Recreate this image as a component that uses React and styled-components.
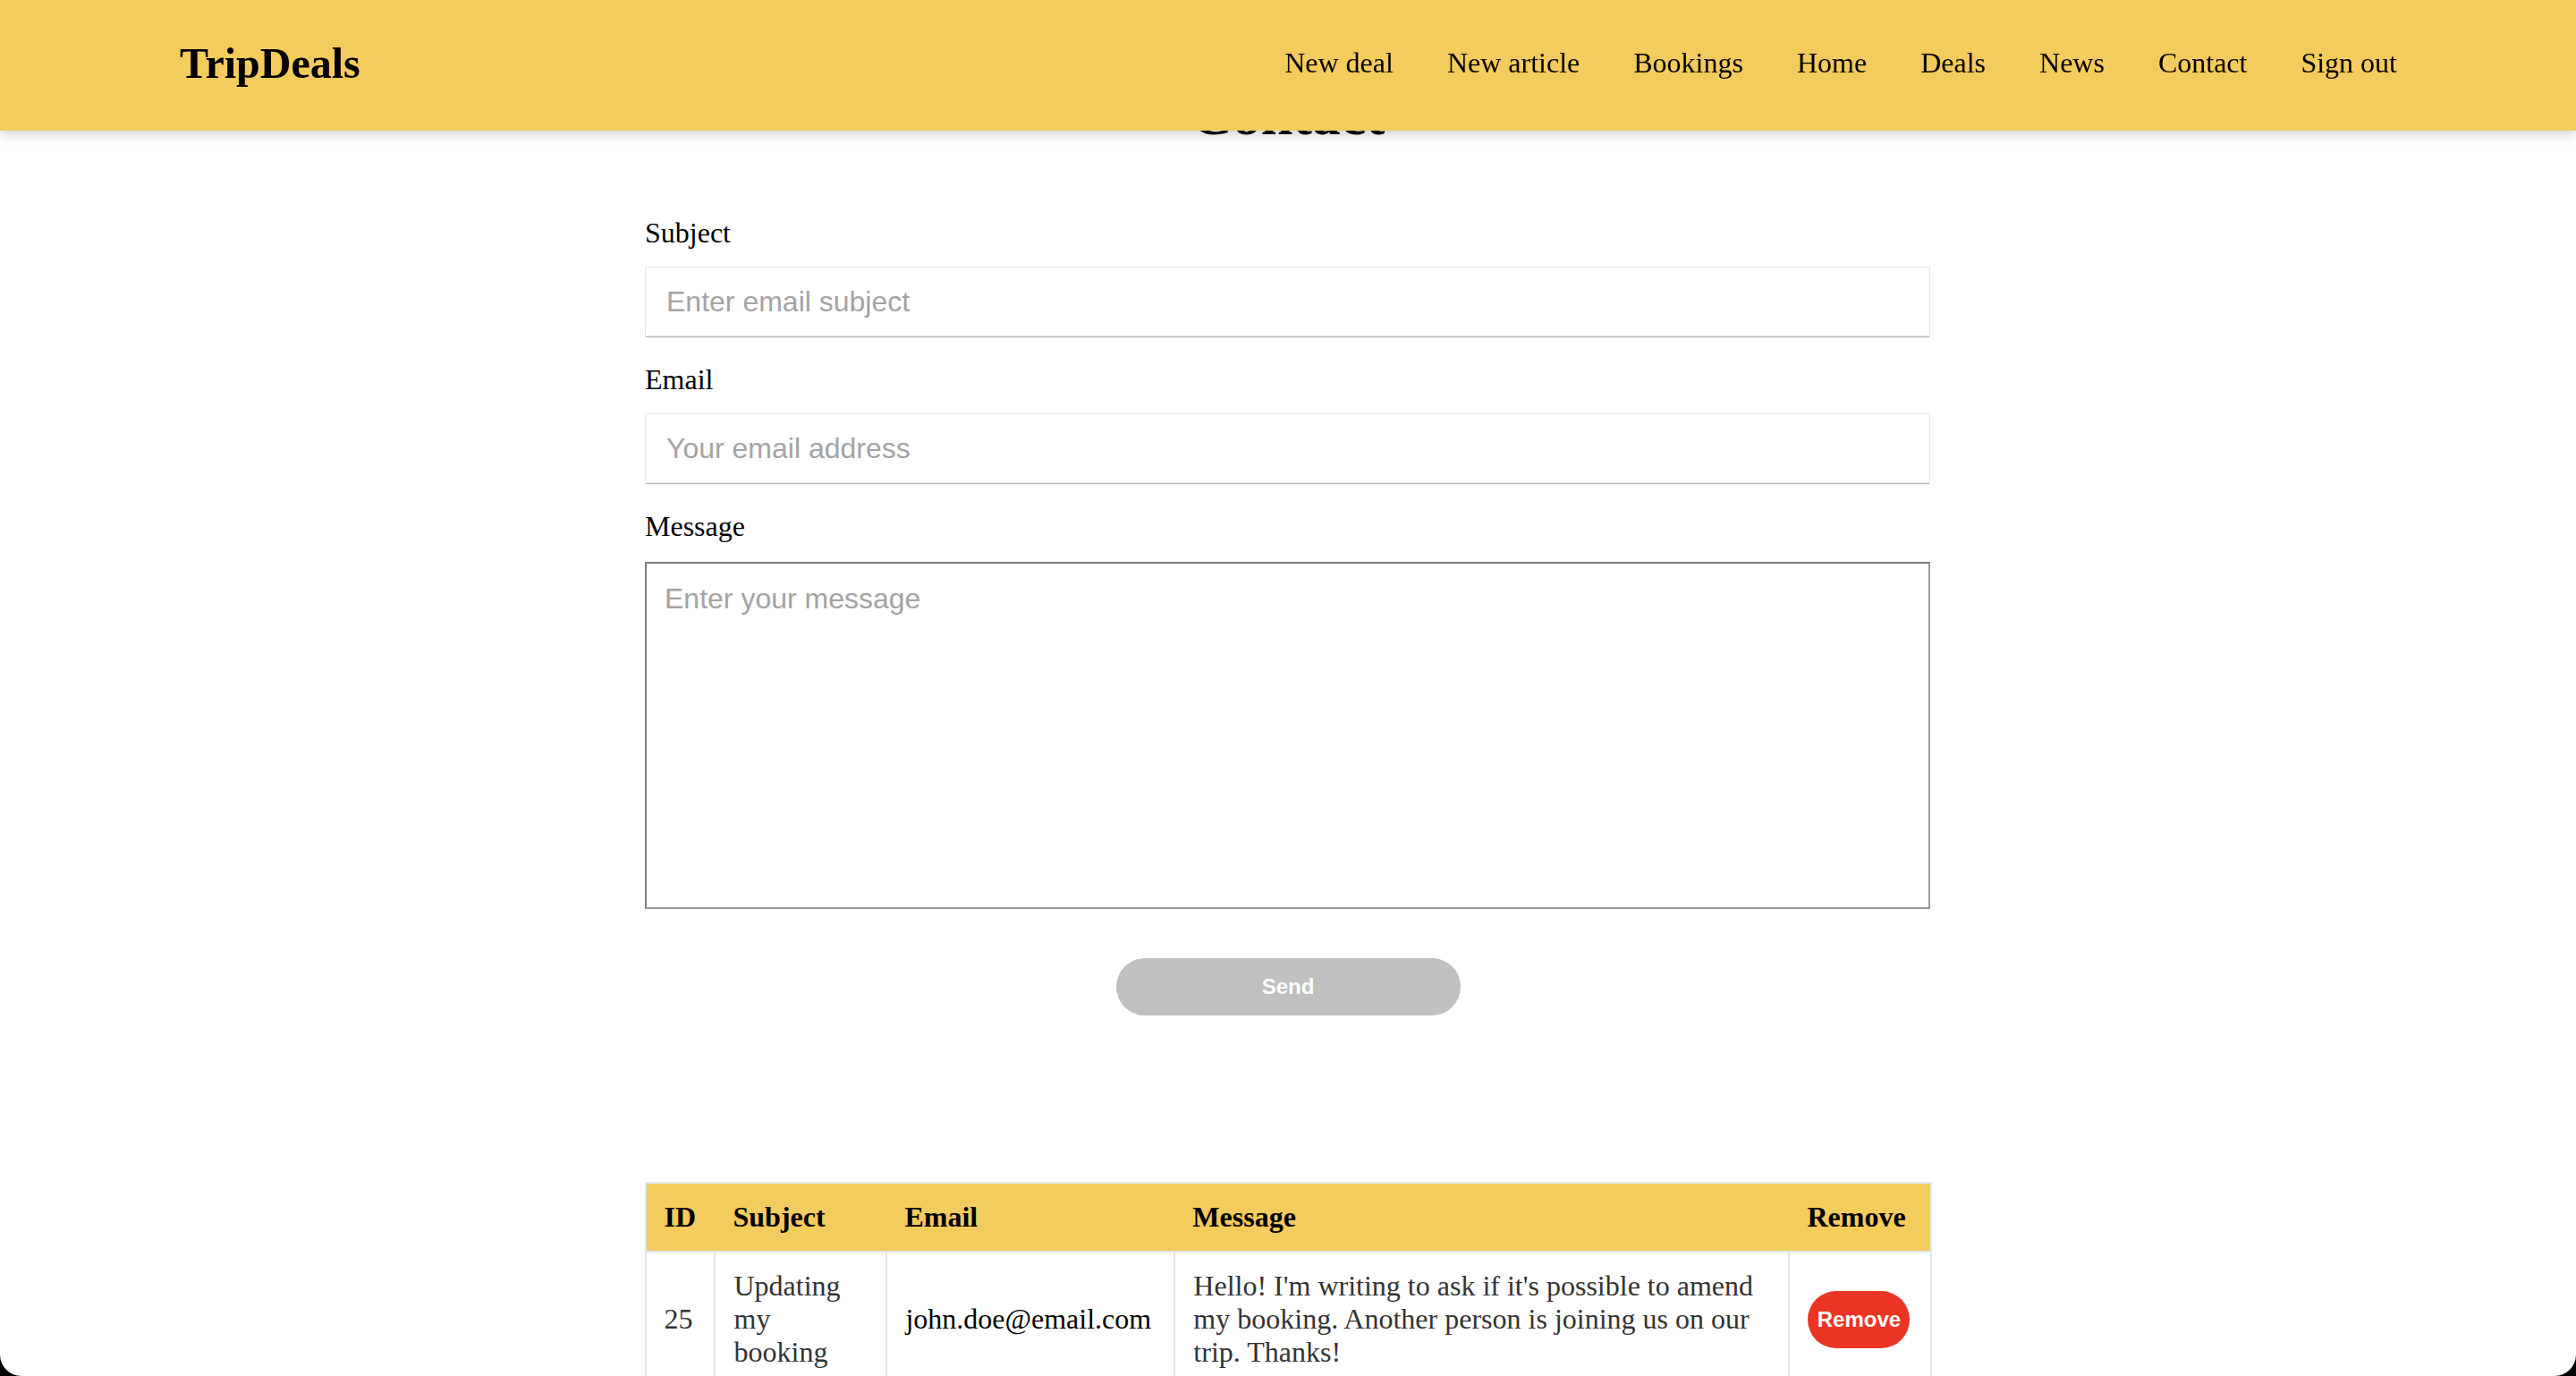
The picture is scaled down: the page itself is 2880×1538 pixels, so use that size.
import React from "react";
import styled, { createGlobalStyle } from "styled-components";

const Global = createGlobalStyle`
  html, body { margin: 0; padding: 0; background: #000; }
  body { font-family: "Liberation Serif", "Times New Roman", serif; }
  * { box-sizing: border-box; }
`;

const Page = styled.div`
  position: relative;
  height: 1538px;
  overflow: hidden;
  background: #fff;
  border-radius: 0 0 24px 24px;
`;

const Header = styled.header`
  position: fixed;
  top: 0;
  left: 0;
  right: 0;
  z-index: 10;
  height: 146px;
  padding: 0 200px 6px 201px;
  background: #f4cb5d;
  box-shadow: 0 3px 14px rgba(0, 0, 0, 0.22);
  display: flex;
  align-items: center;
  justify-content: space-between;
`;

const Logo = styled.div`
  font-size: 48px;
  font-weight: 700;
  color: #000;
`;

const Nav = styled.nav`
  display: flex;
  gap: 60px;
`;

const NavLink = styled.a`
  font-size: 32px;
  color: #000;
  text-decoration: none;
  cursor: pointer;
`;

const Main = styled.main`
  padding-top: 92px;
`;

const Title = styled.h1`
  margin: 0;
  font-size: 64px;
  font-weight: 700;
  text-align: center;
  color: #000;
`;

const Form = styled.form`
  width: 1438px;
  margin: 76px auto 0;
  display: flex;
  flex-direction: column;
`;

const Field = styled.div`
  display: flex;
  flex-direction: column;
  margin-bottom: 30px;
`;

const Label = styled.label`
  font-size: 32px;
  line-height: 37px;
  color: #000;
  margin-bottom: 19px;
`;

const Input = styled.input`
  width: 1437px;
  height: 78px;
  border: 1px solid #e7e7e7;
  box-shadow: 0 2px 1px -1px rgba(0, 0, 0, 0.28);
  padding: 0 23px;
  font-family: "Liberation Sans", Arial, sans-serif;
  font-size: 32px;
  outline: none;
  background: #fff;
  &::placeholder { color: #a3a3a3; }
`;

const TextArea = styled.textarea`
  width: 1437px;
  height: 388px;
  margin-top: 2px;
  border: 2px solid #7b7b7b;
  border-bottom-color: #9a9a9a;
  border-right-color: #9a9a9a;
  padding: 21px 20px;
  font-family: "Liberation Sans", Arial, sans-serif;
  font-size: 32px;
  resize: none;
  outline: none;
  &::placeholder { color: #a3a3a3; }
`;

const ButtonRow = styled.div`
  display: flex;
  justify-content: center;
  margin-top: 25px;
`;

const PillButton = styled.button`
  border: none;
  border-radius: 40px;
  height: 64px;
  width: ${(p) => p.$width}px;
  background: ${(p) => p.$bg};
  color: #fff;
  font-family: "Liberation Sans", Arial, sans-serif;
  font-weight: 700;
  font-size: 24px;
  cursor: pointer;
  padding: 0;
`;

const Table = styled.table`
  width: 1439px;
  margin: 186px auto 0;
  border-collapse: collapse;
  border: 2px solid #dde9ec;
`;

const Th = styled.th`
  background: #f4cb5d;
  font-size: 32px;
  line-height: 37px;
  font-weight: 700;
  text-align: left;
  padding: 19px 20px;
  color: #000;
  border-bottom: 2px solid #dde9ec;
  width: ${(p) => p.$w}px;
`;

const Td = styled.td`
  font-size: 32px;
  line-height: 37px;
  color: ${(p) => (p.$dark ? "#000" : "#333")};
  padding: 19px 20px;
  border: 2px solid #dde9ec;
  vertical-align: middle;
`;

const cols = [
  { label: "ID", w: 78 },
  { label: "Subject", w: 192 },
  { label: "Email", w: 322 },
  { label: "Message", w: 689 },
  { label: "Remove", w: 158 },
];

export default function App() {
  return (
    <>
      <Global />
      <Page>
        <Header>
          <Logo>TripDeals</Logo>
          <Nav>
            {["New deal", "New article", "Bookings", "Home", "Deals", "News", "Contact", "Sign out"].map((n) => (
              <NavLink key={n}>{n}</NavLink>
            ))}
          </Nav>
        </Header>
        <Main>
          <Title>Contact</Title>
          <Form onSubmit={(e) => e.preventDefault()}>
            <Field>
              <Label>Subject</Label>
              <Input placeholder="Enter email subject" />
            </Field>
            <Field>
              <Label>Email</Label>
              <Input placeholder="Your email address" />
            </Field>
            <Field>
              <Label>Message</Label>
              <TextArea placeholder="Enter your message" />
            </Field>
            <ButtonRow>
              <PillButton type="button" $width={385} $bg="#c0c0c0">Send</PillButton>
            </ButtonRow>
          </Form>
          <Table>
            <thead>
              <tr>
                {cols.map((c) => (
                  <Th key={c.label} $w={c.w}>{c.label}</Th>
                ))}
              </tr>
            </thead>
            <tbody>
              <tr>
                <Td>25</Td>
                <Td>Updating my booking</Td>
                <Td $dark>john.doe@email.com</Td>
                <Td>Hello! I'm writing to ask if it's possible to amend my booking. Another person is joining us on our trip. Thanks!</Td>
                <Td>
                  <PillButton type="button" $width={114} $bg="#eb3524">Remove</PillButton>
                </Td>
              </tr>
            </tbody>
          </Table>
        </Main>
      </Page>
    </>
  );
}
